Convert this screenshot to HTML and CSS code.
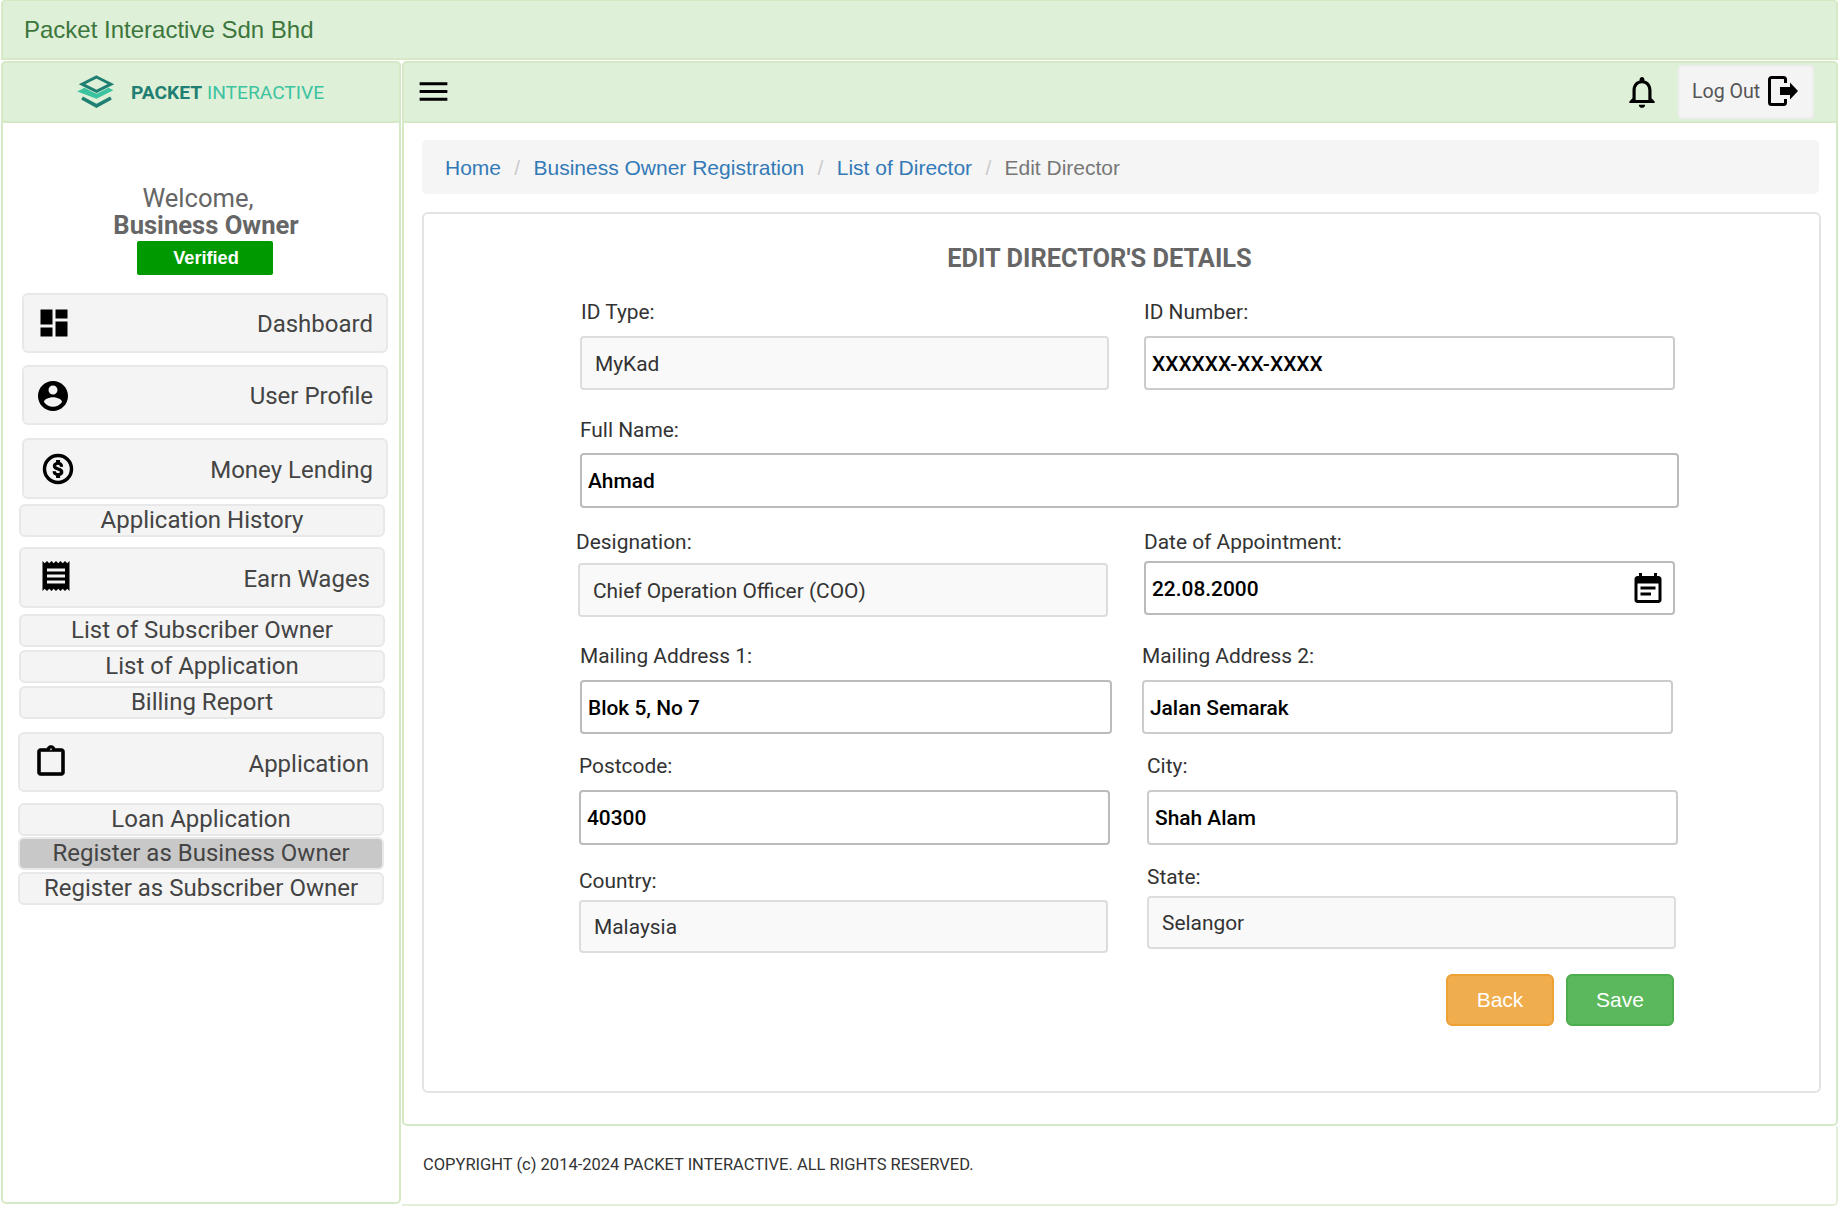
FILE: index.html
```html
<!DOCTYPE html>
<html>
  <head>
    <meta charset="UTF-8">
    <title>Edit Director</title>
    <link rel="stylesheet" href="styles.css">
  </head>
  <body>
    <div class="page">
      <div class="top-bar">Packet Interactive Sdn Bhd</div>
      <div class="layout">
        <aside class="sidebar">
          <div class="logo-bar">
            <svg class="logo-icon" viewBox="0 0 34 28">
              <path d="M17 1.5 29 7.5 17 13.5 5 7.5Z" fill="none" stroke="#1f7f72" stroke-width="2.4"/>
              <path d="M1 13.5 7 10.5 17 15.5 27 10.5 31 12.5 17 19.5Z" fill="#3cc3a0"/>
              <path d="M5 19 17 25.5 29 19" fill="none" stroke="#1f7f72" stroke-width="3"/>
            </svg>
            <span class="logo-text"><b>PACKET</b> INTERACTIVE</span>
          </div>
          <div class="welcome">
            <div class="welcome-hi">Welcome,</div>
            <div class="welcome-name">Business Owner</div>
            <div class="badge">Verified</div>
          </div>
          <nav class="nav">
            <a class="nav-item big n-dash">
              <svg class="icon" viewBox="0 0 24 24"><path d="M3 13h8V3H3v10zm0 8h8v-6H3v6zm10 0h8V11h-8v10zm0-18v6h8V3h-8z"/></svg>
              <span>Dashboard</span>
            </a>
            <a class="nav-item big n-user">
              <svg class="icon" viewBox="0 0 24 24"><path d="M12 2C6.48 2 2 6.48 2 12s4.48 10 10 10 10-4.48 10-10S17.52 2 12 2zm0 3c1.66 0 3 1.34 3 3s-1.34 3-3 3-3-1.34-3-3 1.34-3 3-3zm0 14.2c-2.5 0-4.71-1.28-6-3.22.03-1.99 4-3.08 6-3.08 1.99 0 5.97 1.09 6 3.08-1.29 1.94-3.5 3.22-6 3.22z"/></svg>
              <span>User Profile</span>
            </a>
            <a class="nav-item big n-money">
              <svg class="icon" viewBox="0 0 24 24">
                <circle cx="12" cy="12" r="9" fill="none" stroke="#000" stroke-width="2.3"/>
                <path transform="translate(2.4 2.4) scale(.8)" d="M12.31 11.14c-1.77-.45-2.34-.94-2.34-1.67 0-.84.79-1.43 2.1-1.43 1.38 0 1.9.66 1.94 1.64h1.71c-.05-1.34-.87-2.57-2.49-2.97V5H10.9v1.69c-1.51.32-2.72 1.3-2.72 2.81 0 1.79 1.49 2.69 3.66 3.21 1.95.46 2.34 1.15 2.34 1.87 0 .53-.39 1.39-2.1 1.39-1.6 0-2.23-.72-2.32-1.64H8.04c.1 1.7 1.36 2.66 2.86 2.97V19h2.34v-1.67c1.52-.29 2.72-1.16 2.73-2.77-.01-2.2-1.9-2.96-3.66-3.42z" stroke="#000" stroke-width="1"/>
              </svg>
              <span>Money Lending</span>
            </a>
            <a class="nav-item small n-hist">Application History</a>
            <a class="nav-item big n-earn">
              <svg class="icon" viewBox="0 0 24 24"><path d="M18 17H6v-2h12v2zm0-4H6v-2h12v2zm0-4H6V7h12v2zM3 22l1.5-1.5L6 22l1.5-1.5L9 22l1.5-1.5L12 22l1.5-1.5L15 22l1.5-1.5L18 22l1.5-1.5L21 22V2l-1.5 1.5L18 2l-1.5 1.5L15 2l-1.5 1.5L12 2l-1.5 1.5L9 2 7.5 3.5 6 2 4.5 3.5 3 2v20z"/></svg>
              <span>Earn Wages</span>
            </a>
            <a class="nav-item small n-sub">List of Subscriber Owner</a>
            <a class="nav-item small n-list">List of Application</a>
            <a class="nav-item small n-bill">Billing Report</a>
            <a class="nav-item big n-app">
              <svg class="icon" viewBox="0 0 24 24"><path stroke="#000" stroke-width=".4" d="M19 3h-4.18C14.4 1.84 13.3 1 12 1c-1.3 0-2.4.84-2.82 2H5c-1.1 0-2 .9-2 2v14c0 1.1.9 2 2 2h14c1.1 0 2-.9 2-2V5c0-1.1-.9-2-2-2zm-7-.25c.22 0 .41.1.55.25.12.13.2.31.2.5 0 .41-.34.75-.75.75s-.75-.34-.75-.75c0-.19.08-.37.2-.5.14-.15.33-.25.55-.25zM19 19H5V5h14v14z"/></svg>
              <span>Application</span>
            </a>
            <a class="nav-item small n-loan">Loan Application</a>
            <a class="nav-item small n-biz active">Register as Business Owner</a>
            <a class="nav-item small n-subs">Register as Subscriber Owner</a>
          </nav>
        </aside>

        <div class="content">
          <main class="main-panel">
            <div class="main-head">
              <svg class="menu-icon" viewBox="0 0 24 24"><path d="M3 18h18v-2H3v2zm0-5h18v-2H3v2zm0-7v2h18V6H3z"/></svg>
              <svg class="bell-icon" viewBox="0 0 24 24"><path d="M12 22c1.1 0 2-.9 2-2h-4c0 1.1.89 2 2 2zm6-6v-5c0-3.07-1.64-5.64-4.5-6.32V4c0-.83-.67-1.5-1.5-1.5s-1.5.67-1.5 1.5v.68C7.63 5.36 6 7.92 6 11v5l-2 2v1h16v-1l-2-2zm-2 1H8v-6c0-2.48 1.51-4.5 4-4.5s4 2.02 4 4.5v6z"/></svg>
              <a class="logout">
                <span>Log Out</span>
                <svg class="logout-icon" viewBox="0 0 30 30">
                  <path d="M17.5 7V3.5a2 2 0 0 0-2-2h-12a2 2 0 0 0-2 2v23a2 2 0 0 0 2 2h12a2 2 0 0 0 2-2V23" fill="none" stroke="#000" stroke-width="3"/>
                  <path d="M12 11h10V6.5l8 8.5-8 8.5V19H12z"/>
                </svg>
              </a>
            </div>
            <div class="main-body">
              <ol class="breadcrumb">
                <li><a>Home</a></li>
                <li><a>Business Owner Registration</a></li>
                <li><a>List of Director</a></li>
                <li class="current">Edit Director</li>
              </ol>
              <div class="card">
                <h2 class="card-title">EDIT DIRECTOR'S DETAILS</h2>

                <div class="row row-id">
                  <div class="field"><label class="lbl-nudge">ID Type:</label><input class="locked" value="MyKad" readonly></div>
                  <div class="field"><label>ID Number:</label><input value="XXXXXX-XX-XXXX"></div>
                </div>

                <div class="row row-name">
                  <div class="field"><label>Full Name:</label><input class="strong" value="Ahmad"></div>
                </div>

                <div class="row row-job">
                  <div class="field"><label>Designation:</label><input class="locked" value="Chief Operation Officer (COO)" readonly></div>
                  <div class="field"><label>Date of Appointment:</label>
                    <div class="date-wrap">
                      <input class="strong" value="22.08.2000">
                      <svg class="cal-icon" viewBox="0 0 24 24"><path fill-rule="evenodd" d="M19 4h-1V2h-2v2H8V2H6v2H5c-1.11 0-1.99.9-1.99 2L3 20c0 1.1.89 2 2 2h14c1.1 0 2-.9 2-2V6c0-1.1-.9-2-2-2zm0 16H5V9h14v11zM7 11h10v2H7zm0 4h7v2H7z"/></svg>
                    </div>
                  </div>
                </div>

                <div class="row row-mail">
                  <div class="field"><label>Mailing Address 1:</label><input class="strong" value="Blok 5, No 7"></div>
                  <div class="field"><label>Mailing Address 2:</label><input value="Jalan Semarak"></div>
                </div>

                <div class="row row-post">
                  <div class="field"><label>Postcode:</label><input class="strong" value="40300"></div>
                  <div class="field"><label>City:</label><input value="Shah Alam"></div>
                </div>

                <div class="row row-place">
                  <div class="field"><label>Country:</label><input class="locked" value="Malaysia" readonly></div>
                  <div class="field"><label>State:</label><input class="locked" value="Selangor" readonly></div>
                </div>

                <div class="actions">
                  <button class="btn btn-back">Back</button>
                  <button class="btn btn-save">Save</button>
                </div>
              </div>
            </div>
          </main>
          <footer class="footer">COPYRIGHT (c) 2014-2024 PACKET INTERACTIVE. ALL RIGHTS RESERVED.</footer>
        </div>
      </div>
    </div>
  </body>
</html>
```

FILE: styles.css
```css
* {
  box-sizing: border-box;
}
body {
  margin: 0;
  background: #fff;
  font-family: Roboto, "Liberation Sans", sans-serif;
  color: #333;
}
.page {
  width: 1839px;
  height: 1206px;
  overflow: hidden;
  padding: 0 1px;
}

.top-bar {
  height: 60px;
  padding: 0 21px;
  background: #dff0d8;
  border: 2px solid #d6e9c6;
  border-top-width: 1px;
  border-radius: 4px 4px 0 0;
  color: #3c763d;
  font-family: "Liberation Sans", Arial, sans-serif;
  font-size: 24px;
  line-height: 57px;
}

.layout {
  display: flex;
  gap: 1px;
  margin-top: 1px;
  height: 1145px;
}

/* sidebar */
.sidebar {
  width: 400px;
  flex: none;
  height: 1143px;
  border: 2px solid #d6e9c6;
  border-radius: 5px;
}
.logo-bar {
  height: 62px;
  margin: -2px -2px 0;
  padding-left: 73px;
  display: flex;
  align-items: center;
  gap: 14px;
  background: #dff0d8;
  border: 2px solid #d6e9c6;
  border-radius: 5px 5px 0 0;
}
.logo-icon {
  width: 41px;
  height: 34px;
}
.logo-text {
  font-family: Roboto, sans-serif;
  font-size: 19.2px;
  color: #3cc3a0;
  white-space: nowrap;
}
.logo-text b {
  color: #1f7f72;
  font-weight: 700;
}

.welcome {
  padding-top: 62px;
  text-align: center;
  color: #666;
  font-size: 25.6px;
  line-height: 27px;
}
.welcome-hi {
  padding-right: 6px;
}
.welcome-name {
  padding-left: 10px;
  font-weight: 700;
}
.badge {
  width: 136px;
  height: 34px;
  margin: 2px 0 0 134px;
  padding-left: 2px;
  background: #009900;
  border-radius: 2px;
  color: #fff;
  font-family: "Liberation Sans", Arial, sans-serif;
  font-size: 18.2px;
  font-weight: 700;
  line-height: 34px;
}

.nav {
  display: flex;
  flex-direction: column;
  margin-top: 18px;
}
.nav-item {
  display: flex;
  align-items: center;
  flex: none;
  width: 366px;
  background: #f4f4f4;
  border: 2px solid #e8e8e8;
  border-radius: 6px;
  color: #444;
  font-size: 24px;
  white-space: nowrap;
}
.nav-item.big {
  justify-content: space-between;
  height: 60px;
  padding: 0 13px 0 12px;
}
.nav-item.big span {
  padding-top: 2px;
}
.nav-item.small {
  justify-content: center;
  height: 33px;
  padding-bottom: 1px;
}
.nav-item.active {
  background: #c8c8c8;
}
.icon {
  width: 36px;
  height: 36px;
}
.n-dash { margin-left: 19px; }
.n-user { margin: 12px 0 0 19px; }
.n-user .icon { margin-left: -1px; margin-top: 2px; }
.nav-item.n-money { margin: 13px 0 0 19px; height: 61px; }
.n-money .icon { margin-left: 4px; }
.n-hist { margin: 5px 0 0 16px; }
.nav-item.n-earn { margin: 10px 0 0 16px; height: 61px; }
.n-earn .icon { margin-left: 5px; margin-top: -4px; }
.n-sub { margin: 6px 0 0 16px; }
.n-list { margin: 3px 0 0 16px; }
.n-bill { margin: 3px 0 0 16px; }
.n-app { margin: 13px 0 0 15px; }
.n-app .icon { margin-left: 1px; }
.nav-item.n-app span { padding-top: 4px; }
.n-loan { margin: 11px 0 0 15px; }
.n-biz { margin: 1px 0 0 15px; }
.n-subs { margin: 2px 0 0 15px; }

/* main panel */
.content {
  flex: 1;
}
.main-panel {
  height: 1065px;
  border: 2px solid #d6e9c6;
  border-radius: 5px;
}
.main-head {
  display: flex;
  align-items: center;
  height: 62px;
  margin: -2px -2px 0;
  padding: 0 22px 0 11px;
  background: #dff0d8;
  border: 2px solid #d6e9c6;
  border-radius: 5px 5px 0 0;
}
.menu-icon {
  width: 37px;
  height: 37px;
  margin-top: -2px;
}
.bell-icon {
  width: 38px;
  height: 38px;
  margin-left: auto;
  margin-right: 17px;
}
.logout {
  display: flex;
  align-items: center;
  gap: 8px;
  width: 136px;
  height: 54px;
  padding: 0 0 2px 12px;
  background: #f4f4f4;
  border: 2px solid #eee;
  border-radius: 4px;
  color: #555;
  font-size: 19.6px;
}
.logout-icon {
  width: 30px;
  height: 30px;
}
.main-body {
  padding: 17px 0 0 18px;
}
.breadcrumb {
  display: flex;
  align-items: center;
  width: 1397px;
  height: 54px;
  margin: 0;
  padding: 2px 23px 0;
  list-style: none;
  background: #f5f5f5;
  border-radius: 5px;
  font-family: "Liberation Sans", Arial, sans-serif;
  font-size: 21px;
}
.breadcrumb li + li::before {
  content: "/";
  padding: 0 13.3px;
  color: #ccc;
}
.breadcrumb a {
  color: #337ab7;
}
.breadcrumb .current {
  color: #777;
}

.card {
  width: 1399px;
  height: 881px;
  margin-top: 18px;
  padding: 0 0 0 154px;
  border: 2px solid #e3e3e3;
  border-radius: 6px;
}
.card-title {
  height: 86px;
  margin: 0 0 0 -154px;
  padding: 29px 44px 0 0;
  text-align: center;
  color: #666;
  font-size: 25.4px;
  font-weight: 700;
  line-height: 30px;
}

.row {
  display: grid;
  grid-template-columns: 530px 531px;
  column-gap: 34px;
}
.field label {
  display: block;
  height: 24px;
  margin-bottom: 12px;
  color: #333;
  font-size: 20.9px;
  line-height: 24px;
}
.field input {
  display: block;
  width: 100%;
  height: 54px;
  padding: 1px 6px 0;
  background: #fff;
  border: 2px solid #ccc;
  border-radius: 4px;
  color: #000;
  font-family: Roboto, sans-serif;
  font-size: 20.9px;
  font-weight: 500;
  outline: none;
}
.field input.locked {
  padding-left: 13px;
  background: #f9f9f9;
  border-color: #ddd;
  color: #333;
  font-weight: 400;
}
.field input.strong {
  border-color: #bbb;
}

.row-id { margin-left: 2px; grid-template-columns: 529px 531px; column-gap: 35px; }
.row-id .lbl-nudge { margin-left: 1px; }
.row-name { margin: 28px 0 0 2px; grid-template-columns: 1099px; }
.row-name label { margin-bottom: 11px; }
.row-name input { height: 55px; }
.row-job { margin: 22px 0 0 0; column-gap: 36px; }
.row-job label { margin-bottom: 9px; }
.row-job .field:first-child label { margin-left: -2px; }
.row-job .field:last-child label { margin-bottom: 7px; }
.date-wrap {
  position: relative;
}
.cal-icon {
  position: absolute;
  top: 9px;
  right: 9px;
  width: 36px;
  height: 36px;
}
.row-mail { margin: 27px 0 0 2px; grid-template-columns: 532px 531px; column-gap: 30px; }
.row-post { margin: 20px 0 0 1px; grid-template-columns: 531px 531px; column-gap: 37px; }
.row-post input { height: 55px; }
.row-place { margin: 20px 0 0 1px; grid-template-columns: 529px 529px; column-gap: 39px; }
.row-place .field:first-child { margin-top: 4px; }
.row-place label { margin-bottom: 7px; }
.row-place input { height: 53px; }

.actions {
  display: flex;
  justify-content: flex-end;
  gap: 12px;
  width: 1096px;
  margin-top: 21px;
}
.btn {
  width: 108px;
  height: 52px;
  padding-bottom: 2px;
  border: 2px solid transparent;
  border-radius: 6px;
  color: #fff;
  font-family: "Liberation Sans", Arial, sans-serif;
  font-size: 21px;
}
.btn-back {
  background: #f0ad4e;
  border-color: #eea236;
}
.btn-save {
  background: #5cb85c;
  border-color: #4cae4c;
}

.footer {
  height: 80px;
  padding: 27px 0 0 21px;
  border: 2px solid #e4f0de;
  border-width: 0 2px 2px 0;
  border-radius: 0 0 5px 0;
  color: #333;
  font-size: 16.5px;
  line-height: 24px;
}
```
